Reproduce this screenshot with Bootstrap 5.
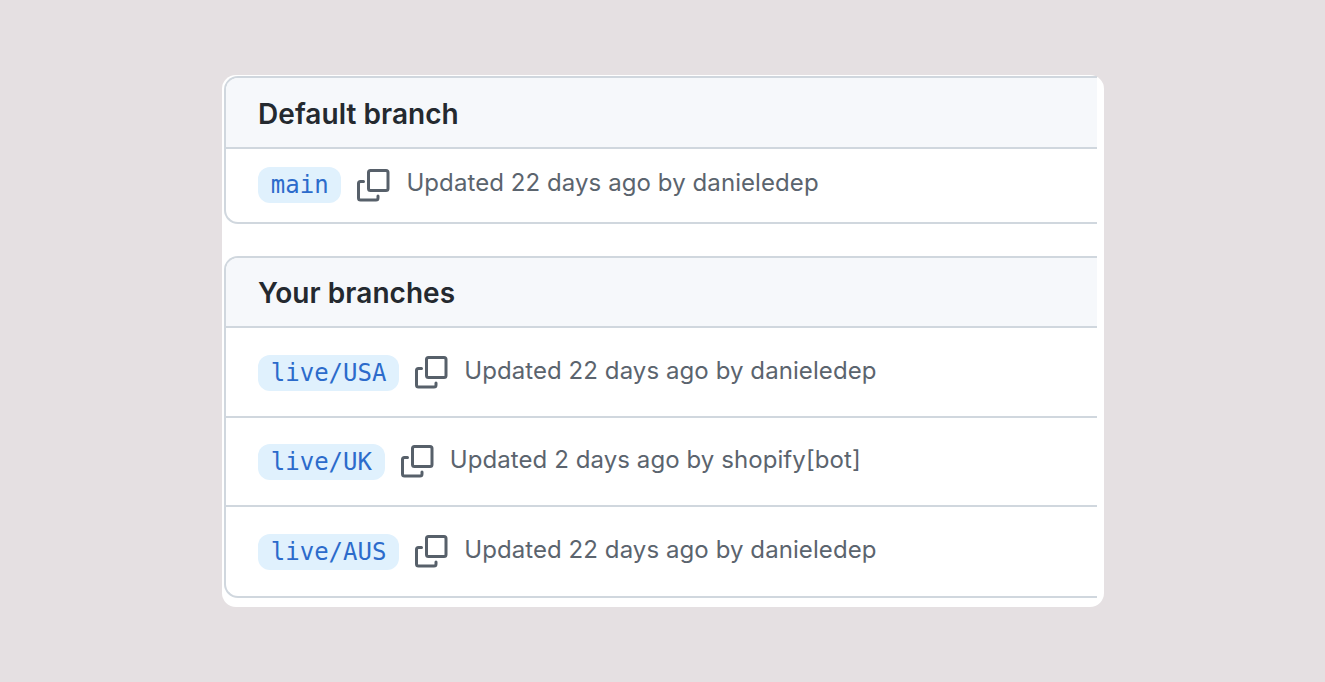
<!doctype html>
<html lang="en">
<head>
<meta charset="utf-8">
<link href="https://cdn.jsdelivr.net/npm/bootstrap@5.3.0/dist/css/bootstrap.min.css" rel="stylesheet">
<style>
html,body{height:100%;}
body{background:#e5e0e2;font-family:Inter,"Liberation Sans",sans-serif;overflow:hidden;}
.sheet{width:882px;height:532px;margin:75px 0 0 222px;background:#fff;border-radius:14px;padding:1px 7px 0 2px;}
.panel{border:2px solid #d0d7de;border-right:0;border-radius:14px 0 0 14px;overflow:hidden;}
.panel-one{height:148px;margin-bottom:32px;}
.panel-two{height:342px;}
.panel-head{background:#f6f8fb;border-bottom:2px solid #d0d7de;padding:2px 0 0 32px;color:#24292f;font-size:28px;font-weight:600;letter-spacing:.05px;line-height:1;}
.panel-one .panel-head{height:71px;}
.panel-two .panel-head{height:70px;}
.row-line{padding-left:32px;padding-top:2px;border-bottom:2px solid #d0d7de;}
.row-line:last-child{border-bottom:0;}
.row-a{height:73px;padding-top:0;padding-bottom:1px;}
.row-b{height:90px;padding-top:1px;}
.row-b2{height:89px;padding-top:0;}
.row-c{height:87px;}
.ref{background:#e0f1fd;color:#2c6bcb;font-family:"DejaVu Sans Mono","Liberation Mono",monospace;font-size:24px;line-height:36px;height:36px;padding:0 12.800px;border-radius:12px;}
.copy{width:33px;height:33px;margin-left:16px;margin-right:16px;flex:none;}
.meta{color:#5b646e;font-size:24px;letter-spacing:.08px;line-height:1;margin-bottom:4px;}
</style>
</head>
<body>
<div class="sheet">
  <section class="panel panel-one">
    <div class="panel-head d-flex align-items-center">Default branch</div>
    <div class="row-line row-a d-flex align-items-center">
      <span class="ref">main</span>
      <svg class="copy" viewBox="0 0 33 33" fill="none" stroke="#57606a" stroke-width="3" stroke-linejoin="round" stroke-linecap="round"><path d="M6.500 12.500H3.500A2 2 0 0 0 1.500 14.500V29A2 2 0 0 0 3.500 31H19A2 2 0 0 0 21 29V27"/><rect x="11.500" y="1.500" width="19.500" height="20" rx="2"/></svg>
      <span class="meta">Updated 22 days ago by danieledep</span>
    </div>
  </section>
  <section class="panel panel-two">
    <div class="panel-head d-flex align-items-center">Your branches</div>
    <div class="row-line row-b d-flex align-items-center">
      <span class="ref">live/USA</span>
      <svg class="copy" viewBox="0 0 33 33" fill="none" stroke="#57606a" stroke-width="3" stroke-linejoin="round" stroke-linecap="round"><path d="M6.500 12.500H3.500A2 2 0 0 0 1.500 14.500V29A2 2 0 0 0 3.500 31H19A2 2 0 0 0 21 29V27"/><rect x="11.500" y="1.500" width="19.500" height="20" rx="2"/></svg>
      <span class="meta">Updated 22 days ago by danieledep</span>
    </div>
    <div class="row-line row-b2 d-flex align-items-center">
      <span class="ref">live/UK</span>
      <svg class="copy" viewBox="0 0 33 33" fill="none" stroke="#57606a" stroke-width="3" stroke-linejoin="round" stroke-linecap="round"><path d="M6.500 12.500H3.500A2 2 0 0 0 1.500 14.500V29A2 2 0 0 0 3.500 31H19A2 2 0 0 0 21 29V27"/><rect x="11.500" y="1.500" width="19.500" height="20" rx="2"/></svg>
      <span class="meta">Updated 2 days ago by shopify[bot]</span>
    </div>
    <div class="row-line row-c d-flex align-items-center">
      <span class="ref">live/AUS</span>
      <svg class="copy" viewBox="0 0 33 33" fill="none" stroke="#57606a" stroke-width="3" stroke-linejoin="round" stroke-linecap="round"><path d="M6.500 12.500H3.500A2 2 0 0 0 1.500 14.500V29A2 2 0 0 0 3.500 31H19A2 2 0 0 0 21 29V27"/><rect x="11.500" y="1.500" width="19.500" height="20" rx="2"/></svg>
      <span class="meta">Updated 22 days ago by danieledep</span>
    </div>
  </section>
</div>
<script src="https://cdn.jsdelivr.net/npm/bootstrap@5.3.0/dist/js/bootstrap.bundle.min.js"></script>
</body>
</html>
